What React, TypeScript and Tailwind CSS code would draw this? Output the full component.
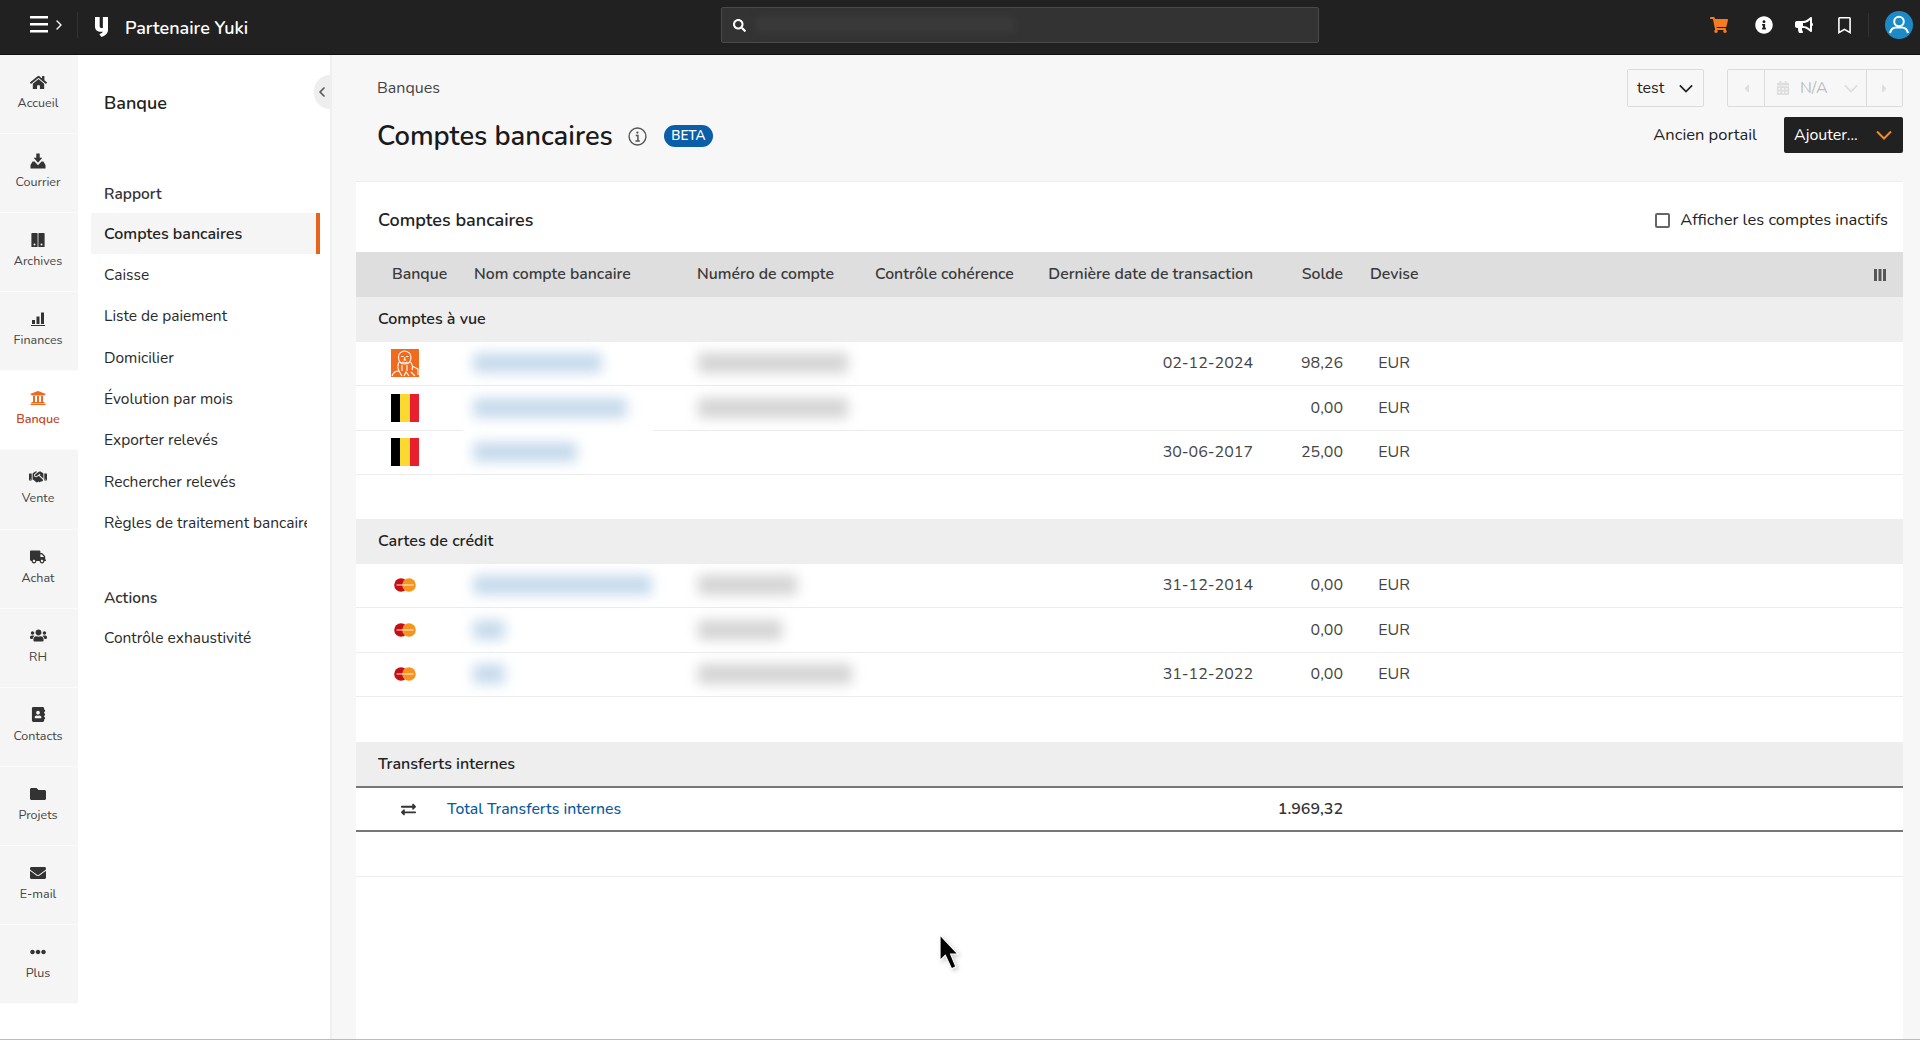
import { ChevronLeft, ChevronRight } from "lucide-react";
import {
  FaAddressBook,
  FaBullhorn,
  FaCalendarAlt,
  FaCaretLeft,
  FaCaretRight,
  FaEllipsisH,
  FaEnvelope,
  FaExchangeAlt,
  FaFolder,
  FaHome,
  FaInfoCircle,
  FaRegBookmark,
  FaSearch,
  FaShoppingCart,
  FaTruck,
  FaUniversity,
  FaUsers,
} from "react-icons/fa";
import { FaHandshake } from "react-icons/fa6";

const font = "font-['Nunito','Noto_Sans',sans-serif]";

function InboxIcon() {
  return (
    <svg viewBox="0 0 16 16" className="w-[16px] h-[16px]" fill="currentColor">
      <path d="M6.300 0.500h3.400v4.300h2.600L8 9.800 3.700 4.800h2.600z" />
      <path d="M2.600 8.500h1.900L8 12.300l3.500-3.800h1.900l2.100 3.500v3.500H.5V12z" />
    </svg>
  );
}

function BindersIcon() {
  return (
    <svg viewBox="0 0 16 16" className="w-[16px] h-[16px]" fill="currentColor" fillRule="evenodd">
      <path d="M2 1h5a.6.6 0 0 1 .6.6v12.8a.6.6 0 0 1-.6.6H2a.6.6 0 0 1-.6-.6V1.600A.6.6 0 0 1 2 1zm2.500 10.500a1 1 0 1 0 0 2 1 1 0 0 0 0-2z" />
      <path d="M9 1h5a.6.6 0 0 1 .6.6v12.800a.6.6 0 0 1-.6.6H9a.6.6 0 0 1-.6-.6V1.600A.6.6 0 0 1 9 1zm2.500 10.500a1 1 0 1 0 0 2 1 1 0 0 0 0-2z" />
    </svg>
  );
}

function BarsIcon() {
  return (
    <svg viewBox="0 0 16 16" className="w-[16px] h-[16px]" fill="currentColor">
      <path d="M1 15h14v-1H1zM2 9h3v4H2zM6.500 5.500h3V13h-3zM11 1.500h3V13h-3z" />
    </svg>
  );
}

function AvatarIcon() {
  return (
    <svg viewBox="0 0 28 28" className="w-[28px] h-[28px]">
      <circle cx="14" cy="14" r="14" fill="#1d8ac8" />
      <circle cx="14" cy="10.500" r="4.800" fill="none" stroke="#fff" strokeWidth="2" />
      <path d="M5 22c1-4 4-5.500 6-5.500h6c2 0 5 1.500 6 5.500" fill="none" stroke="#fff" strokeWidth="2" />
    </svg>
  );
}

function OutlineInfo() {
  return (
    <svg viewBox="0 0 18 18" className="w-[19px] h-[19px] text-[#555]" fill="none" stroke="currentColor">
      <circle cx="9" cy="9" r="8" strokeWidth="1.300" />
      <path d="M7.300 8h2.100v5M7 13.200h4.200" strokeWidth="1.400" />
      <circle cx="8.900" cy="5.300" r="1.100" fill="currentColor" stroke="none" />
    </svg>
  );
}

// the wide flat chevron the select boxes use
function SelectChevron({ className }: { className: string }) {
  return (
    <svg viewBox="0 0 16 10" className={className} fill="none" stroke="currentColor" strokeWidth="2">
      <path d="M1 1.500l7 7 7-7" />
    </svg>
  );
}

function IngLogo() {
  return (
    <svg viewBox="0 0 28 28" className="w-[28px] h-[28px]">
      <rect width="28" height="28" fill="#f26b1d" />
      <g fill="none" stroke="#fff" strokeWidth="1.100">
        <path d="M7.500 8c0-3.500 3.200-6 6-6s6.500 2.500 6.500 6-1.500 7-6.200 7-6.300-3.500-6.300-7z" />
        <path d="M10 7.500h2.500M15 7.500h2.500M12.500 11h2.500M13.800 8v3M11 13l2.800 1 2.800-1" />
        <path d="M8 13c-1.500 3-1.500 6 0 9M19.500 13c2 2.500 2.500 5 1.500 8M11 16v6M16 16v6M21 17l6 3v6" />
        <path d="M1 27c1-3 4-5 7-5l3 5M13 27l2-4 3 4M20 23l4 4" />
      </g>
    </svg>
  );
}

function BelgianFlag() {
  return (
    <div className="flex w-[28px] h-[28px]">
      <div className="flex-1 bg-black" />
      <div className="flex-1 bg-[#fada30]" />
      <div className="flex-1 bg-[#e8202e]" />
    </div>
  );
}

function MasterCard() {
  return (
    <svg viewBox="0 0 22 14" className="w-[22px] h-[14px]">
      <circle cx="7" cy="7" r="6.800" fill="#c60f13" />
      <circle cx="15" cy="7" r="6.800" fill="#f7941d" />
      <rect x="2.500" y="6" width="17" height="2" fill="#fff" opacity="0.45" />
    </svg>
  );
}

function Blob({ w, kind, h = 16, ml = 0 }: { w: number; kind: "name" | "num"; h?: number; ml?: number }) {
  const color = kind === "name" ? "#c6daec" : "#d4d4d4";
  const halo = kind === "name" ? "#e9f1f8" : "#ededed";
  return (
    <div
      className="rounded-[3px] blur-[6px]"
      style={{ width: w, height: h, marginLeft: ml, backgroundColor: color, boxShadow: `0 0 0 5px ${halo}` }}
    />
  );
}

const railItems = [
  { label: "Accueil", icon: <FaHome size={17} /> },
  { label: "Courrier", icon: <InboxIcon /> },
  { label: "Archives", icon: <BindersIcon /> },
  { label: "Finances", icon: <BarsIcon /> },
  { label: "Banque", icon: <FaUniversity size={16} />, active: true },
  { label: "Vente", icon: <FaHandshake size={18} /> },
  { label: "Achat", icon: <FaTruck size={16} /> },
  { label: "RH", icon: <FaUsers size={17} /> },
  { label: "Contacts", icon: <FaAddressBook size={15} /> },
  { label: "Projets", icon: <FaFolder size={16} /> },
  { label: "E-mail", icon: <FaEnvelope size={16} /> },
  { label: "Plus", icon: <FaEllipsisH size={16} /> },
];

const reportLinks = [
  "Comptes bancaires",
  "Caisse",
  "Liste de paiement",
  "Domicilier",
  "Évolution par mois",
  "Exporter relevés",
  "Rechercher relevés",
  "Règles de traitement bancaires",
];

const columns = "grid grid-cols-[107px_223px_178px_149px_240px_90px_85px_1fr]";

type Row = {
  logo: React.ReactNode;
  nameW: number;
  numW?: number;
  numMl?: number;
  date?: string;
  solde: string;
  halo?: boolean;
};

const comptes: Row[] = [
  { logo: <IngLogo />, nameW: 125, numW: 146, numMl: 14, date: "02-12-2024", solde: "98,26" },
  { logo: <BelgianFlag />, nameW: 150, numW: 146, numMl: 14, solde: "0,00", halo: true },
  { logo: <BelgianFlag />, nameW: 100, date: "30-06-2017", solde: "25,00" },
];

const cartes: Row[] = [
  { logo: <MasterCard />, nameW: 175, numW: 95, numMl: 14, date: "31-12-2014", solde: "0,00" },
  { logo: <MasterCard />, nameW: 28, numW: 80, numMl: 14, solde: "0,00" },
  { logo: <MasterCard />, nameW: 28, numW: 150, numMl: 14, date: "31-12-2022", solde: "0,00" },
];

function GroupRow({ title }: { title: string }) {
  return (
    <div className="h-[44.500px] bg-[#eeeeee] flex items-center pl-[22px] text-[16px] font-semibold text-[#222]">
      {title}
    </div>
  );
}

function AccountRow({ row }: { row: Row }) {
  return (
    <div className={`${columns} h-[44.500px] items-center border-b border-[#ececec] text-[16px] text-[#444]`}>
      <div className="flex justify-center pr-[9px]">{row.logo}</div>
      <div className="relative self-stretch flex items-center pl-[12px]">
        <Blob w={row.nameW} kind="name" />
        {row.halo && <span className="absolute left-0 -bottom-[1px] w-[190px] h-[2px] bg-white" />}
      </div>
      <div>{row.numW ? <Blob w={row.numW} kind="num" ml={row.numMl} /> : null}</div>
      <div />
      <div className="text-right">{row.date}</div>
      <div className="text-right">{row.solde}</div>
      <div className="text-center pl-[27px] pr-[10px]">EUR</div>
      <div />
    </div>
  );
}

export default function App() {
  return (
    <div className={`${font} w-[1920px] h-[1040px] overflow-hidden flex flex-col bg-white relative border-b border-[#bbbbbb]`}>
      {/* Top bar */}
      <header className="h-[55px] shrink-0 bg-[#212121] border-b border-[#111] flex items-center text-white">
        <div className="w-[78px] h-[26px] -mt-[4px] flex items-center border-r border-[#333] pl-[30px] gap-[3px]">
          <svg viewBox="0 0 18 17" className="w-[18px] h-[17px] -mt-[2px]" fill="#fff">
            <path d="M0 0h18v2.400H0zM0 7h18v2.400H0zM0 14h18v2.400H0z" />
          </svg>
          <ChevronRight className="w-[16px] h-[16px]" strokeWidth={2} />
        </div>
        <svg viewBox="0 0 10.600 18" preserveAspectRatio="none" className="ml-[17px] w-[13px] h-[20px]" fill="#fff">
          <path d="M0 0h3.800v8c0 1.300.7 1.900 1.600 1.900h1V0h4.200v12c0 1-.4 2-1 2.800-.9 1.400-2.300 2.400-4.300 3.200L3.500 15.500c1.300-.6 2.400-1.200 3-2.200H5C2 13.300 0 11.500 0 8.500z" />
        </svg>
        <span className="ml-[17px] mt-[2px] text-[18px] font-semibold w-[190px]">Partenaire Yuki</span>
        <div className="ml-[406px] w-[598px] h-[36px] -mt-[4px] bg-[#333] border border-[#4a4a4a] rounded-[2px] flex items-center pl-[11px] gap-[9px]">
          <FaSearch size={13} />
          <div className="w-[260px] h-[16px] bg-[#3a3a3a] blur-[3px]" />
        </div>
        <div className="ml-auto flex items-center -mt-[4px] pr-[7px]">
          <FaShoppingCart size={18} className="text-[#f47b20] mr-[27px]" />
          <FaInfoCircle size={18} className="mr-[22px]" />
          <FaBullhorn size={18} className="mr-[23px]" />
          <FaRegBookmark size={17} className="mr-[15px]" />
          <div className="w-px h-[24px] bg-[#333] mr-[16px]" />
          <AvatarIcon />
        </div>
      </header>

      <div className="flex flex-1 min-h-0">
        {/* Icon rail */}
        <nav className="w-[78px] shrink-0 text-[#333]">
          {railItems.map((item) => (
            <div
              key={item.label}
              className={`h-[79.100px] flex flex-col items-center pt-[17px] pr-[2px] text-[12.500px] border-b border-[#fbfbfb] ${
                item.active ? "bg-white font-semibold" : "bg-[#f5f5f5]"
              }`}
            >
              <div className={`h-[20px] flex items-center ${item.active ? "text-[#ee6a1f]" : "text-[#333]"}`}>
                {item.icon}
              </div>
              <span className={`mt-[2px] ${item.active ? "text-[#c8451a]" : "text-[#444]"}`}>{item.label}</span>
            </div>
          ))}
        </nav>

        {/* Section menu */}
        <aside className="relative w-[254px] shrink-0 bg-white border-r-2 border-[#efefef] pl-[13px] text-[15.500px] text-[#2a2a2a]">
          <div className="absolute right-0 top-[20px] w-[16px] h-[34px] bg-[#eeeeee] rounded-l-full flex items-center justify-center text-[#555]">
            <ChevronLeft className="w-[16px] h-[16px]" strokeWidth={2.500} />
          </div>
          <div className="pl-[13px] pt-[36px] text-[18px] font-semibold leading-[24px] text-[#222]">Banque</div>
          <div className="pl-[13px] mt-[67px] h-[24px] flex items-center font-semibold text-[#333]">Rapport</div>
          <ul className="mt-[7px]">
            {reportLinks.map((link, i) => (
              <li
                key={link}
                className={`w-[229px] pl-[13px] pr-[13px] flex items-center ${
                  i === 0
                    ? "h-[41px] bg-[#f5f5f5] border-r-4 border-[#e8631c] text-[16px] font-semibold text-[#222]"
                    : "h-[41.300px]"
                }`}
              >
                <span className="block w-[203px] overflow-hidden whitespace-nowrap">{link}</span>
              </li>
            ))}
          </ul>
          <div className="pl-[13px] mt-[43px] h-[24px] flex items-center font-semibold text-[#333]">Actions</div>
          <div className="pl-[13px] mt-[16px] h-[24px] flex items-center">Contrôle exhaustivité</div>
        </aside>

        {/* Main area */}
        <main className="flex-1 min-w-0 bg-[#f7f7f7] flex flex-col pl-[24px] pr-[17px]">
          <div className="h-[126px] shrink-0 flex justify-between">
            <div className="pl-[21px]">
              <div className="pt-[23px] text-[16px] leading-[20px] text-[#444]">Banques</div>
              <div className="mt-[18px] flex items-center">
                <h1 className="text-[27.300px] leading-[40px] font-semibold text-[#1a1a1a]">Comptes bancaires</h1>
                <div className="ml-[15px] flex">
                  <OutlineInfo />
                </div>
                <span className="ml-[17px] w-[49px] h-[22px] rounded-full bg-[#0a5fa8] text-white text-[13.500px] font-semibold flex items-center justify-center">
                  BETA
                </span>
              </div>
            </div>
            <div className="flex flex-col items-end pt-[14px]">
              <div className="flex gap-[23px]">
                <div className="w-[77px] h-[38px] border border-[#dcdcdc] rounded-[2px] flex items-center justify-between pl-[9px] pr-[10px] text-[16px] text-[#222]">
                  test
                  <SelectChevron className="w-[14px] h-[9px]" />
                </div>
                <div className="w-[176px] h-[38px] border border-[#dcdcdc] rounded-[2px] flex items-center text-[#bdbdbd] text-[16px]">
                  <div className="w-[37px] h-full flex items-center justify-center border-r border-[#dcdcdc]">
                    <FaCaretLeft size={13} className="text-[#ddd]" />
                  </div>
                  <div className="w-[101px] h-full flex items-center pl-[11px] gap-[10px]">
                    <FaCalendarAlt size={14} className="text-[#ddd]" />
                    <span className="mr-[6px]">N/A</span>
                    <SelectChevron className="w-[14px] h-[9px] text-[#ddd]" />
                  </div>
                  <div className="flex-1 h-full flex items-center justify-center border-l border-[#dcdcdc]">
                    <FaCaretRight size={13} className="text-[#ddd]" />
                  </div>
                </div>
              </div>
              <div className="mt-[10px] flex items-center">
                <span className="mt-[1px] text-[16.500px] text-[#222] mr-[27px]">Ancien portail</span>
                <div className="w-[119px] h-[36px] bg-[#212121] rounded-[2px] flex items-center justify-between pl-[10px] pr-[11px] text-white text-[16px]">
                  Ajouter...
                  <SelectChevron className="w-[16px] h-[10px] text-[#f58a2a]" />
                </div>
              </div>
            </div>
          </div>

          {/* Accounts card */}
          <section className="flex-1 bg-white border-t border-[#eeeeee] min-h-0">
            <div className="h-[70px] pt-[7px] flex items-center justify-between pl-[22px] pr-[15px]">
              <h2 className="text-[18px] font-semibold text-[#222]">Comptes bancaires</h2>
              <label className="flex items-center gap-[10px] text-[16.500px] text-[#222]">
                <span className="w-[15px] h-[15px] border-2 border-[#666] rounded-[2px]" />
                Afficher les comptes inactifs
              </label>
            </div>

            <div className={`${columns} h-[45px] bg-[#dedede] items-center text-[15.800px] font-semibold text-[#3a3a3a]`}>
              <div className="pl-[36px]">Banque</div>
              <div className="pl-[11px]">Nom compte bancaire</div>
              <div className="pl-[11px]">Numéro de compte</div>
              <div className="pl-[11px] whitespace-nowrap">Contrôle cohérence</div>
              <div className="text-right whitespace-nowrap">Dernière date de transaction</div>
              <div className="text-right">Solde</div>
              <div className="pl-[27px]">Devise</div>
              <div className="flex justify-end pr-[16px]">
                <svg viewBox="0 0 14 14" className="w-[14px] h-[14px]" fill="#555">
                  <path d="M1 1h3v12H1zM5.500 1h3v12h-3zM10 1h3v12h-3z" />
                </svg>
              </div>
            </div>

            <GroupRow title="Comptes à vue" />
            {comptes.map((row, i) => (
              <AccountRow key={i} row={row} />
            ))}
            <div className="h-[44px]" />

            <GroupRow title="Cartes de crédit" />
            {cartes.map((row, i) => (
              <AccountRow key={i} row={row} />
            ))}
            <div className="h-[45px]" />

            <div className="h-[46px] bg-[#eeeeee] flex items-center pl-[22px] text-[16px] font-semibold text-[#222] border-b-2 border-[#777]">
              Transferts internes
            </div>
            <div className={`${columns} h-[44px] items-center border-b-2 border-[#777] text-[16px]`}>
              <div className="flex justify-center pr-[3px] text-[#333]">
                <FaExchangeAlt size={15} />
              </div>
              <div className="col-span-3 -ml-[16px] mt-[1px] text-[#0a5a9e] font-medium text-[15.800px]">Total Transferts internes</div>
              <div />
              <div className="text-right font-semibold text-[#333]">1.969,32</div>
            </div>
            <div className="h-[44.500px] border-b border-[#ececec]" />
          </section>
        </main>
      </div>

      {/* Mouse pointer from the recording */}
      <svg viewBox="0 0 20 34" className="absolute left-[939px] top-[934px] w-[21px] h-[36px] drop-shadow-[2px_2px_2px_rgba(0,0,0,0.2)]">
        <path d="M1 1l17 18h-7l5 12-4 2-6-13-5 5z" fill="#000" stroke="#fff" strokeWidth="1" />
      </svg>
    </div>
  );
}
